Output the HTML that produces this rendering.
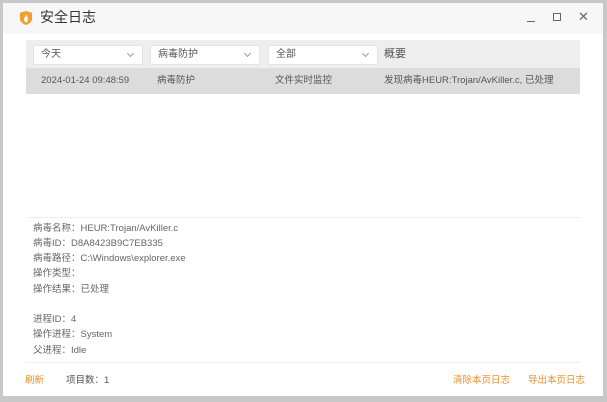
<!DOCTYPE html>
<html><head><meta charset="utf-8"><style>
*{margin:0;padding:0;box-sizing:border-box}
body{width:607px;height:402px;background:#c8c8c8;font-family:"Liberation Sans","Noto Sans CJK SC",sans-serif;position:relative;overflow:hidden}
.win{position:absolute;left:3px;top:3px;width:600px;height:393px;background:#fff}
.title{position:absolute;left:3px;top:3px;width:600px;height:31px;background:#f7f7f7}
.a{position:absolute}
.t{position:absolute;font-size:9.5px;color:#555;white-space:nowrap;line-height:12px}
.sel{position:absolute;top:45px;height:20px;background:#fff;border:1px solid #e4e4e4}
.sel span{position:absolute;left:7px;top:3px;font-size:10px;color:#555;line-height:12px}
.sel i{position:absolute;right:9px;top:5px;width:5px;height:5px;border-right:1px solid #999;border-bottom:1px solid #999;transform:rotate(45deg)}
.d{position:absolute;left:33px;font-size:9.5px;color:#666;line-height:12px;white-space:nowrap}
.o{color:#e8902a;font-size:9.5px;position:absolute;top:375px;line-height:12px}
</style></head><body>
<div class="win"></div>
<div class="title"></div>
<svg class="a" style="left:19px;top:10px" width="14" height="16" viewBox="0 0 16 18"><path d="M8 1 L15 3 L15 9 C15 14 11 16 8 17 C5 16 1 14 1 9 L1 3 Z" fill="#f0a030"/><path d="M8 5 C10 8 11 10 9 14 C7 14 5 12 6 9 C7 8 8 7 8 5Z" fill="#fff"/></svg>
<div class="t" style="left:40px;top:9px;font-size:14px;line-height:16px;color:#333">安全日志</div>
<div class="a" style="left:527px;top:21px;width:8px;height:1px;background:#666"></div>
<div class="a" style="left:553px;top:13px;width:8px;height:8px;border:1px solid #666"></div>
<div class="t" style="left:578px;top:9px;font-size:13px;line-height:16px;color:#666">✕</div>
<div class="a" style="left:26px;top:40px;width:554px;height:28px;background:#eeeeee"></div>
<div class="sel" style="left:33px;width:110px"><span>今天</span><i></i></div>
<div class="sel" style="left:150px;width:110px"><span>病毒防护</span><i></i></div>
<div class="sel" style="left:268px;width:110px"><span>全部</span><i></i></div>
<div class="t" style="left:384px;top:47px;font-size:11px;line-height:14px">概要</div>
<div class="a" style="left:26px;top:68px;width:554px;height:26px;background:#dcdcdc"></div>
<div class="t" style="left:41px;top:75px">2024-01-24 09:48:59</div>
<div class="t" style="left:157px;top:75px">病毒防护</div>
<div class="t" style="left:275px;top:75px">文件实时监控</div>
<div class="t" style="left:384px;top:75px">发现病毒HEUR:Trojan/AvKiller.c, 已处理</div>
<div class="a" style="left:26px;top:217px;width:555px;height:1px;background:#eee"></div>
<div class="a" style="left:26px;top:362px;width:555px;height:1px;background:#f0f0f0"></div>
<div class="d" style="top:223px">病毒名称：HEUR:Trojan/AvKiller.c</div>
<div class="d" style="top:238px">病毒ID：D8A8423B9C7EB335</div>
<div class="d" style="top:253px">病毒路径：C:\Windows\explorer.exe</div>
<div class="d" style="top:268px">操作类型：</div>
<div class="d" style="top:284px">操作结果：已处理</div>
<div class="d" style="top:314px">进程ID：4</div>
<div class="d" style="top:329px">操作进程：System</div>
<div class="d" style="top:345px">父进程：Idle</div>
<div class="o" style="left:25px">刷新</div>
<div class="o" style="left:66px;color:#555">项目数：1</div>
<div class="o" style="left:453px">清除本页日志</div>
<div class="o" style="left:528px">导出本页日志</div>
</body></html>
